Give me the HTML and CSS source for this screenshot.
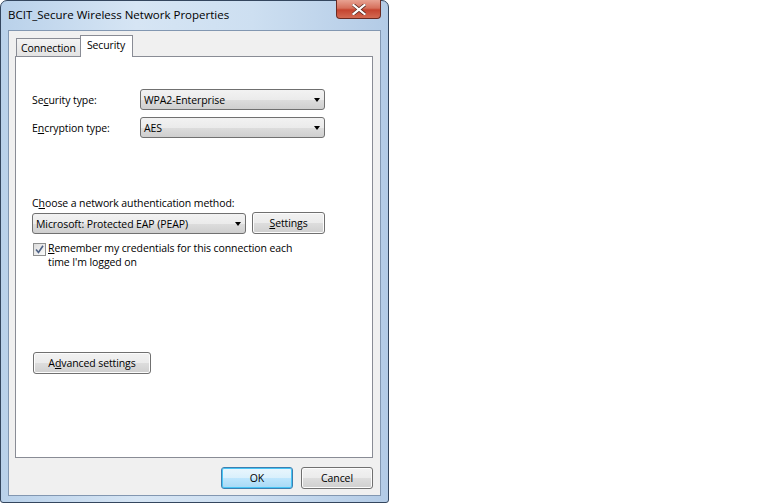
FILE: index.html
```html
<!DOCTYPE html>
<html lang="en">
<head>
    <meta charset="UTF-8">
    <title>BCIT_Secure Wireless Network Properties</title>
    <link rel="stylesheet" href="styles.css">
</head>
<body>
    <div class="window">
        <div class="titlebar">
            <span class="title">BCIT_Secure Wireless Network Properties</span>
            <div class="close">
                <svg width="14" height="11" viewBox="0 0 14 11">
                    <path d="M1.5 1 L12.5 10 M12.5 1 L1.5 10" stroke="#5a2a22" stroke-width="3.6" stroke-linecap="square"/>
                    <path d="M1.5 1 L12.5 10 M12.5 1 L1.5 10" stroke="#fff" stroke-width="2.2" stroke-linecap="square"/>
                </svg>
            </div>
        </div>

        <div class="client">
            <div class="tabs">
                <div class="tab">Connection</div>
                <div class="tab active">Security</div>
            </div>

            <div class="panel">
                <div class="field">
                    <span class="label">Se<u>c</u>urity type:</span>
                    <div class="combo wide">WPA2-Enterprise</div>
                </div>
                <div class="field">
                    <span class="label">E<u>n</u>cryption type:</span>
                    <div class="combo wide">AES</div>
                </div>

                <p class="caption">C<u>h</u>oose a network authentication method:</p>
                <div class="auth-row">
                    <div class="combo auth">Microsoft: Protected EAP (PEAP)</div>
                    <div class="btn settings"><u>S</u>ettings</div>
                </div>

                <div class="check-row">
                    <span class="checkbox">
                        <svg width="9" height="9" viewBox="0 0 9 9">
                            <path d="M1 4.5 L3.5 7.5 L8 0.8" fill="none" stroke="#4d6185" stroke-width="1.6"/>
                        </svg>
                    </span>
                    <span class="check-label">
                        <span class="line"><u>R</u>emember my credentials for this connection each</span>
                        <span class="line">time I'm logged on</span>
                    </span>
                </div>

                <div class="btn advanced">A<u>d</u>vanced settings</div>
            </div>

            <div class="buttons">
                <div class="btn default">OK</div>
                <div class="btn">Cancel</div>
            </div>
        </div>
    </div>
</body>
</html>
```

FILE: styles.css
```css
body {
    margin: 0;
    background: #fff;
    font-family: "Open Sans", "Noto Sans", sans-serif;
    font-size: 10.5px;
    letter-spacing: -0.1px;
    color: #000;
}
u {
    letter-spacing: 0;
    text-decoration-thickness: 1px;
    text-underline-offset: 1px;
}

/* window frame */
.window {
    width: 389px;
    height: 503px;
    box-sizing: border-box;
    border: 1px solid #34465e;
    border-radius: 7px 7px 3px 3px;
    background: linear-gradient(to right, #b9d1ea 0%, #d6e5f4 35%, #cddff1 65%, #b3cbe6 100%);
    display: flex;
    flex-direction: column;
    padding: 0 7px 6px 7px;
}
.titlebar {
    height: 29px;
    display: flex;
    align-items: flex-start;
}
.title {
    margin-top: 6px;
    font-size: 11.5px;
    letter-spacing: 0;
}
.close {
    margin-left: auto;
    margin-top: -1px;
    width: 45px;
    height: 19px;
    box-sizing: border-box;
    border: 1px solid #6b2a21;
    border-top: none;
    border-radius: 0 0 4px 4px;
    background: linear-gradient(#e8a292 0%, #d6705c 45%, #c5442f 55%, #d36a52 100%);
    display: flex;
    align-items: center;
    justify-content: center;
}

.client {
    flex: 1;
    border: 1px solid #8297b1;
    background: #f0f0f0;
    padding: 4px 7px 6px 6px;
    display: flex;
    flex-direction: column;
}

/* tabs */
.tabs {
    height: 21px;
    display: flex;
    align-items: flex-end;
    padding-left: 1px;
}
.tab {
    height: 18px;
    box-sizing: border-box;
    border: 1px solid #898c95;
    border-bottom: none;
    background: linear-gradient(#f3f3f3, #e3e3e3);
    padding: 1px 4px 0 4px;
    line-height: 16px;
}
.tab.active {
    height: 22px;
    margin-bottom: -1px;
    margin-left: -1px;
    background: #fff;
    padding: 0 7px 0 6px;
    position: relative;
    z-index: 1;
    line-height: 18px;
}

.panel {
    height: 402px;
    box-sizing: border-box;
    border: 1px solid #898c95;
    background: #fff;
    padding: 32px 16px 0 16px;
}

.field {
    display: flex;
    align-items: center;
    height: 21px;
    margin-bottom: 7px;
}
.label {
    width: 108px;
}

/* drop down lists */
.combo {
    height: 21px;
    box-sizing: border-box;
    border: 1px solid #707070;
    border-radius: 3px;
    background: linear-gradient(#f2f2f2 0%, #ebebeb 50%, #dddddd 51%, #cfcfcf 100%);
    padding-left: 3px;
    display: flex;
    align-items: center;
}
.combo::after {
    content: "";
    margin-left: auto;
    margin-right: 4px;
    border-left: 3.5px solid transparent;
    border-right: 3.5px solid transparent;
    border-top: 4px solid #000;
}
.combo.wide {
    width: 185px;
}
.combo.auth {
    width: 214px;
}

.caption {
    margin: 58px 0 0 0;
    line-height: 15px;
}
.auth-row {
    display: flex;
    gap: 6px;
    margin-top: 2px;
}

/* buttons */
.btn {
    height: 22px;
    box-sizing: border-box;
    border: 1px solid #707070;
    border-radius: 3px;
    background: linear-gradient(#f2f2f2 0%, #ebebeb 50%, #dddddd 51%, #cfcfcf 100%);
    box-shadow: inset 0 0 0 1px #fcfcfc;
    display: flex;
    align-items: center;
    justify-content: center;
}
.btn.settings {
    width: 73px;
    margin-top: -1px;
}
.btn.advanced {
    width: 118px;
    margin-top: 83px;
    margin-left: 1px;
}
.btn.default {
    border-color: #3c7fb1;
    background: linear-gradient(#eaf6fd 0%, #d9f0fc 50%, #bee6fd 51%, #a7d9f5 100%);
    box-shadow: inset 0 0 0 1px #48c5f5;
}

.check-row {
    display: flex;
    align-items: flex-start;
    margin-top: 7px;
    margin-left: 1px;
}
.checkbox {
    width: 13px;
    height: 13px;
    box-sizing: border-box;
    border: 1px solid #8e8f8f;
    background: linear-gradient(135deg, #dcdcdc, #fbfbfb);
    display: flex;
    align-items: center;
    justify-content: center;
    margin-top: 2px;
    flex-shrink: 0;
}
.check-label {
    display: flex;
    flex-direction: column;
    margin-left: 2px;
    line-height: 14px;
}

.buttons {
    display: flex;
    justify-content: flex-end;
    gap: 8px;
    margin-top: 9px;
}
.buttons .btn {
    width: 72px;
}
```
